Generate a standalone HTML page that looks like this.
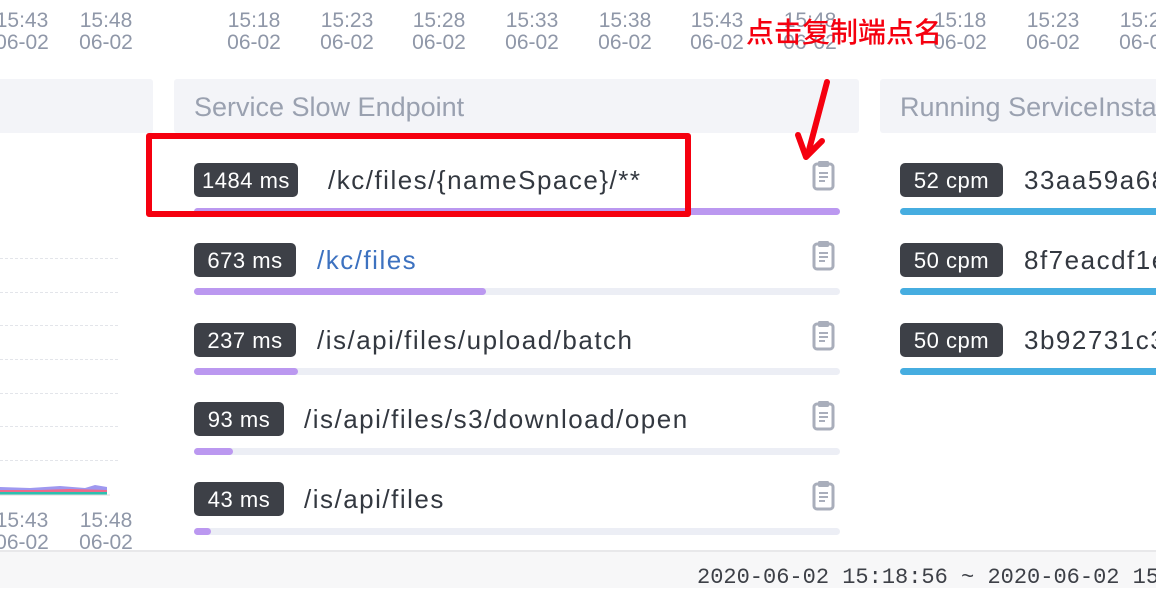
<!DOCTYPE html>
<html><head><meta charset="utf-8"><style>
*{margin:0;padding:0;box-sizing:border-box}
body{width:1156px;height:588px;overflow:hidden;background:#fff;font-family:"Liberation Sans","Noto Sans CJK SC",sans-serif;position:relative}
.a{position:absolute}
.t{position:absolute;color:#8f97a8;font-size:21px;line-height:22px;text-align:center;width:80px}
.hd{position:absolute;top:79px;height:54px;background:#f3f4f8;border-radius:3px;color:#9aa1b0;font-size:27px;line-height:56px;padding-left:20px;white-space:nowrap;overflow:hidden}
.b{position:absolute;height:34px;background:#3d4047;color:#fff;font-size:22px;line-height:35px;border-radius:5px;text-align:center;letter-spacing:0.5px}
.n{position:absolute;font-size:26px;line-height:34px;color:#333840;white-space:nowrap;letter-spacing:1.5px}
.bar{position:absolute;height:7px;border-radius:4px;background:#eceef5}
.bar i{display:block;height:7px;border-radius:4px;background:#bb98f0}
.dl{position:absolute;left:0;width:118px;border-top:1px dashed #e3e5ea}
</style></head><body>
<div class="t" style="left:-18px;top:10px">15:43<br>06-02</div>
<div class="t" style="left:66px;top:10px">15:48<br>06-02</div>
<div class="t" style="left:214px;top:10px">15:18<br>06-02</div>
<div class="t" style="left:307px;top:10px">15:23<br>06-02</div>
<div class="t" style="left:399px;top:10px">15:28<br>06-02</div>
<div class="t" style="left:492px;top:10px">15:33<br>06-02</div>
<div class="t" style="left:585px;top:10px">15:38<br>06-02</div>
<div class="t" style="left:677px;top:10px">15:43<br>06-02</div>
<div class="t" style="left:770px;top:10px">15:48<br>06-02</div>
<div class="t" style="left:920px;top:10px">15:18<br>06-02</div>
<div class="t" style="left:1013px;top:10px">15:23<br>06-02</div>
<div class="t" style="left:1106px;top:10px">15:28<br>06-02</div>

<div class="hd" style="left:-10px;width:163px"></div>
<div class="hd" style="left:174px;width:685px">Service Slow Endpoint</div>
<div class="hd" style="left:880px;width:290px">Running ServiceInstance</div>

<div class="dl" style="top:258px"></div><div class="dl" style="top:292px"></div><div class="dl" style="top:325px"></div><div class="dl" style="top:359px"></div><div class="dl" style="top:393px"></div><div class="dl" style="top:426px"></div><div class="dl" style="top:460px"></div>
<svg class="a" style="left:0;top:482px" width="110" height="20"><path d="M0 5 L30 6 L60 4 L85 6 L95 3 L107 5 L107 13 L0 13Z" fill="#9e98f0"/><path d="M0 8 L40 8 L70 7 L107 8 L107 13 L0 13Z" fill="#f06a8a"/><path d="M0 10 L107 10 L107 13 L0 13Z" fill="#2ec0b0"/><line x1="0" y1="13" x2="110" y2="13" stroke="#ddd"/></svg>
<div class="t" style="left:-18px;top:510px">15:43<br>06-02</div>
<div class="t" style="left:66px;top:510px">15:48<br>06-02</div>

<div class="b" style="left:194px;top:163px;width:104px">1484 ms</div><div class="n" style="left:328px;top:163px">/kc/files/{nameSpace}/**</div>
<div class="bar" style="left:194px;top:208px;width:646px"><i style="width:646px"></i></div>
<div class="b" style="left:194px;top:243px;width:102px">673 ms</div><div class="n" style="left:317px;top:243px;color:#3d72c0">/kc/files</div>
<div class="bar" style="left:194px;top:288px;width:646px"><i style="width:292px"></i></div>
<div class="b" style="left:194px;top:323px;width:102px">237 ms</div><div class="n" style="left:317px;top:323px">/is/api/files/upload/batch</div>
<div class="bar" style="left:194px;top:368px;width:646px"><i style="width:104px"></i></div>
<div class="b" style="left:194px;top:402px;width:90px">93 ms</div><div class="n" style="left:304px;top:402px">/is/api/files/s3/download/open</div>
<div class="bar" style="left:194px;top:448px;width:646px"><i style="width:39px"></i></div>
<div class="b" style="left:194px;top:482px;width:90px">43 ms</div><div class="n" style="left:304px;top:482px">/is/api/files</div>
<div class="bar" style="left:194px;top:528px;width:646px"><i style="width:17px"></i></div>

<svg width="0" height="0" style="position:absolute"><defs><g id="cb"><rect x="2" y="4" width="19" height="25" rx="3" fill="none" stroke="#a9aebb" stroke-width="3"/><rect x="6" y="1" width="11" height="6" rx="1.5" fill="#a9aebb"/><path d="M7 13h9M7 17h9M7 21h6" stroke="#a9aebb" stroke-width="2"/></g></defs></svg>
<svg class="a" style="left:812px;top:160px" width="24" height="31"><use href="#cb"/></svg>
<svg class="a" style="left:812px;top:240px" width="24" height="31"><use href="#cb"/></svg>
<svg class="a" style="left:812px;top:320px" width="24" height="31"><use href="#cb"/></svg>
<svg class="a" style="left:812px;top:400px" width="24" height="31"><use href="#cb"/></svg>
<svg class="a" style="left:812px;top:480px" width="24" height="31"><use href="#cb"/></svg>

<div class="b" style="left:900px;top:163px;width:103px">52 cpm</div><div class="n" style="left:1024px;top:163px">33aa59a68</div>
<div class="bar" style="left:900px;top:208px;width:300px;background:#46ade0"></div>
<div class="b" style="left:900px;top:243px;width:103px">50 cpm</div><div class="n" style="left:1024px;top:243px">8f7eacdf1e</div>
<div class="bar" style="left:900px;top:288px;width:300px;background:#46ade0"></div>
<div class="b" style="left:900px;top:323px;width:103px">50 cpm</div><div class="n" style="left:1024px;top:323px">3b92731c3</div>
<div class="bar" style="left:900px;top:368px;width:300px;background:#46ade0"></div>

<div class="a" style="left:146px;top:133px;width:545px;height:84px;border:6px solid #f5000f;border-radius:3px"></div>
<div class="a" style="left:746px;top:15px;font-size:28px;line-height:32px;color:#f5000f;font-family:'Noto Sans CJK SC',sans-serif;font-weight:500;white-space:nowrap">点击复制端点名</div>
<svg class="a" style="left:790px;top:75px" width="50" height="90"><path d="M37 7 L19 75" stroke="#f5000f" stroke-width="6" stroke-linecap="round"/><path d="M8 60 L16 82 L32 66" fill="none" stroke="#f5000f" stroke-width="6" stroke-linecap="round" stroke-linejoin="round"/></svg>

<div class="a" style="left:0;top:550px;width:1156px;height:38px;background:#f7f7f8;border-top:2px solid #e8e8ea"></div>
<div class="a" style="left:697px;top:565px;font-family:'Liberation Mono',monospace;font-size:22px;line-height:26px;color:#3d4047;white-space:nowrap">2020-06-02 15:18:56 ~ 2020-06-02 15</div>
</body></html>
